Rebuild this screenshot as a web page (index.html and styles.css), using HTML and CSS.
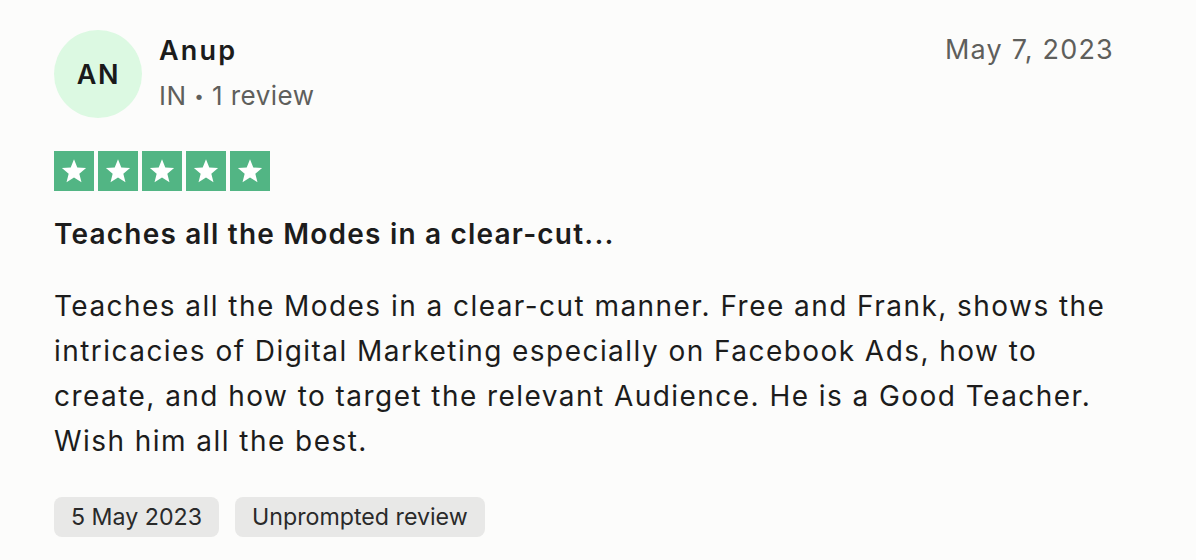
FILE: index.html
```html
<!DOCTYPE html>
<html lang="en">
<head>
<meta charset="utf-8">
<title>Review</title>
<link rel="stylesheet" href="styles.css">
</head>
<body>
<article class="review">
  <header class="review-header">
    <div class="consumer">
      <div class="avatar">AN</div>
      <div class="consumer-info">
        <span class="consumer-name">Anup</span>
        <span class="consumer-meta">IN <span class="dot">•</span> 1 review</span>
      </div>
    </div>
    <time class="review-date">May 7, 2023</time>
  </header>
  <div class="stars" aria-label="Rated 5 out of 5">
    <span class="star"><svg viewBox="0 0 24 24"><path d="M12 3.2l2.47 6.15 6.6.45-5.07 4.24 1.61 6.42L12 16.95l-5.61 3.51 1.61-6.42-5.07-4.24 6.6-.45z"/></svg></span>
    <span class="star"><svg viewBox="0 0 24 24"><path d="M12 3.2l2.47 6.15 6.6.45-5.07 4.24 1.61 6.42L12 16.95l-5.61 3.51 1.61-6.42-5.07-4.24 6.6-.45z"/></svg></span>
    <span class="star"><svg viewBox="0 0 24 24"><path d="M12 3.2l2.47 6.15 6.6.45-5.07 4.24 1.61 6.42L12 16.95l-5.61 3.51 1.61-6.42-5.07-4.24 6.6-.45z"/></svg></span>
    <span class="star"><svg viewBox="0 0 24 24"><path d="M12 3.2l2.47 6.15 6.6.45-5.07 4.24 1.61 6.42L12 16.95l-5.61 3.51 1.61-6.42-5.07-4.24 6.6-.45z"/></svg></span>
    <span class="star"><svg viewBox="0 0 24 24"><path d="M12 3.2l2.47 6.15 6.6.45-5.07 4.24 1.61 6.42L12 16.95l-5.61 3.51 1.61-6.42-5.07-4.24 6.6-.45z"/></svg></span>
  </div>
  <h2 class="review-title">Teaches all the Modes in a clear-cut...</h2>
  <p class="review-text">Teaches all the Modes in a clear-cut manner. Free and Frank, shows the intricacies of Digital Marketing especially on Facebook Ads, how to create, and how to target the relevant Audience. He is a Good Teacher. Wish him all the best.</p>
  <div class="tags">
    <span class="tag">5 May 2023</span>
    <span class="tag">Unprompted review</span>
  </div>
</article>
</body>
</html>
```

FILE: styles.css
```css
* { box-sizing: border-box; }
html, body { margin: 0; padding: 0; background: #fcfcfb; }
body {
  font-family: Inter, "Noto Sans", "Liberation Sans", sans-serif;
  color: #1c1c1c;
}
.review {
  width: 1112px;
  padding: 30px 0 0 54px;
}
.review-header {
  display: flex;
  justify-content: space-between;
  align-items: flex-start;
  height: 88px;
}
.consumer {
  display: flex;
  align-items: flex-start;
  gap: 17px;
}
.avatar {
  width: 88px;
  height: 88px;
  border-radius: 50%;
  background: #dcf9e2;
  display: flex;
  align-items: center;
  justify-content: center;
  font-size: 27px;
  font-weight: 600;
  color: #1a1a1a;
  letter-spacing: 1.6px;
  padding-left: 1px;
}
.consumer-info {
  display: flex;
  flex-direction: column;
  padding-top: 2px;
}
.consumer-name {
  font-size: 27px;
  font-weight: 600;
  line-height: 38px;
  letter-spacing: 2.2px;
  color: #1c1c1c;
}
.consumer-meta {
  margin-top: 4px;
  font-size: 26px;
  line-height: 44px;
  color: #5f5f5c;
  letter-spacing: 0.45px;
}
.dot { font-size: 17px; vertical-align: 3px; }
.review-date {
  font-size: 27px;
  line-height: 40px;
  color: #5f5f5c;
  letter-spacing: 1.2px;
  margin-right: -2px;
}
.stars {
  display: flex;
  gap: 4px;
  margin-top: 33px;
}
.star {
  width: 40px;
  height: 40px;
  background: #52b584;
  display: flex;
  align-items: center;
  justify-content: center;
}
.star svg { width: 32px; height: 32px; fill: #fff; }
.review-title {
  margin: 25px 0 0;
  font-size: 28px;
  font-weight: 600;
  line-height: 36px;
  letter-spacing: 1.2px;
  color: #1c1c1c;
}
.review-text {
  margin: 32px 0 0;
  font-size: 28px;
  line-height: 45px;
  letter-spacing: 1.45px;
  color: #1c1c1c;
}
.tags {
  display: flex;
  gap: 16px;
  margin-top: 33px;
}
.tag {
  background: #e8e8e7;
  border-radius: 8px;
  height: 40px;
  padding: 0 17px;
  display: flex;
  align-items: center;
  font-size: 23.2px;
  color: #2a2a2a;
}
```
